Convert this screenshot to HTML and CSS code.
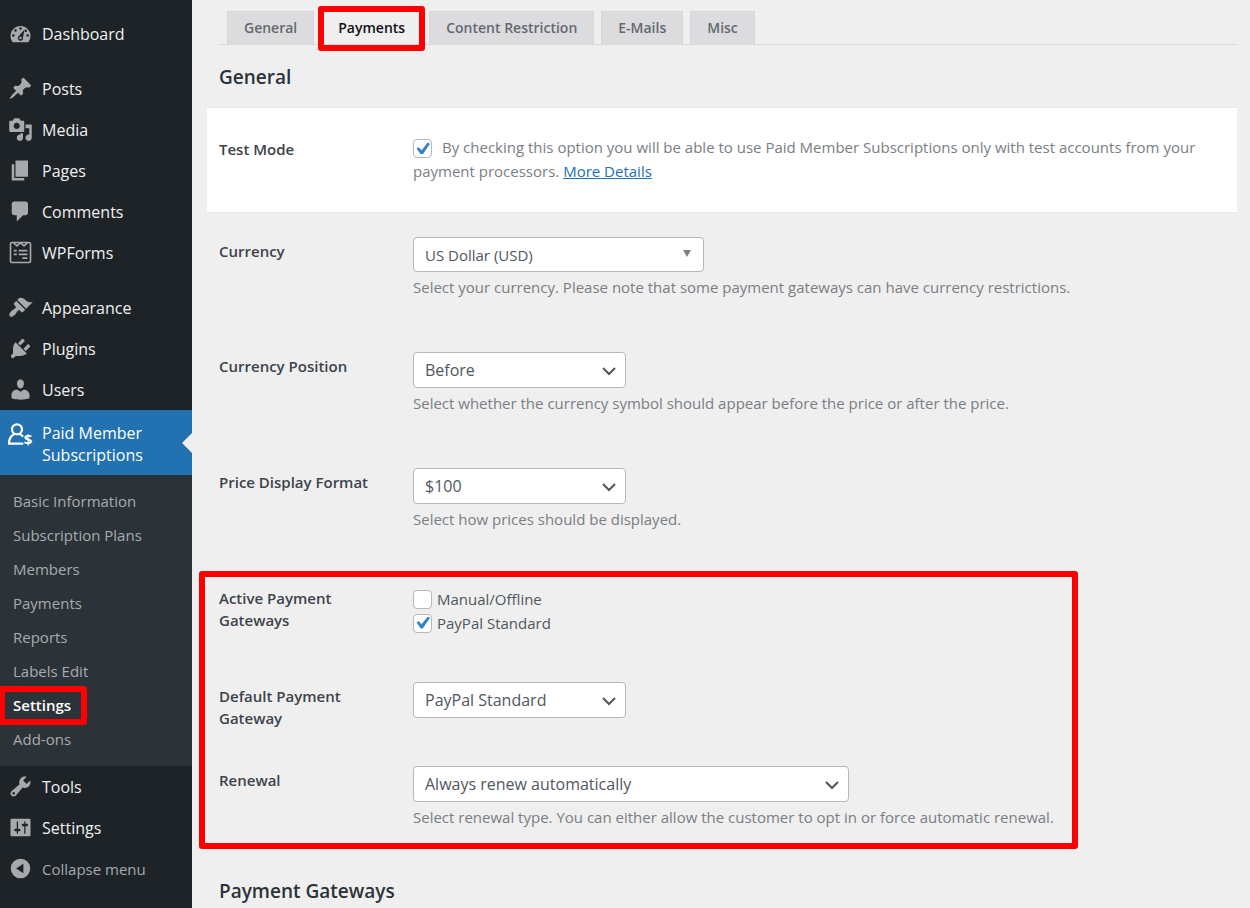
FILE: index.html
```html
<!DOCTYPE html>
<html lang="en">
<head>
  <meta charset="UTF-8">
  <meta name="viewport" content="width=device-width, initial-scale=1">
  <title>Settings - Paid Member Subscriptions</title>
  <link rel="stylesheet" href="styles.css">
</head>
<body>
  <nav class="sidebar" aria-label="Main menu">
    <ul class="menu">
      <li><a class="menu-link" href="#">
        <svg class="icon" viewBox="0 0 20 20"><path d="M3.8 17h12.4c1.1-1.400 1.800-3.100 1.800-5 0-4.400-3.600-8-8-8s-8 3.600-8 8c0 1.900.7 3.600 1.800 5z"/><g fill="#1d2327"><circle cx="10" cy="6" r="1"/><circle cx="6" cy="7.500" r="1"/><circle cx="4.300" cy="11.500" r="1"/><circle cx="15.700" cy="11.500" r="1"/><circle cx="14.200" cy="7.800" r="1"/><path d="M12.500 7.500l.5.2-1 5.300a2.100 2.100 0 1 1-3.300-1z"/></g><circle cx="10" cy="13.500" r="1"/></svg>
        Dashboard</a></li>
      <li class="separator"></li>
      <li><a class="menu-link" href="#">
        <svg class="icon" viewBox="0 0 20 20"><path d="M10.440 3.020l1.820-1.820 6.360 6.350-1.830 1.820c-1.050-.68-2.480-.57-3.410.36l-.75.75c-.92.93-1.040 2.350-.35 3.410l-1.830 1.820-2.410-2.410-2.800 2.790c-.42.42-3.380 2.710-3.800 2.290s1.860-3.390 2.280-3.810l2.790-2.790L4.100 9.360l1.830-1.820c1.050.69 2.480.57 3.400-.36l.75-.75c.93-.92 1.050-2.350.36-3.410z"/></svg>
        Posts</a></li>
      <li><a class="menu-link" href="#">
        <svg class="icon" viewBox="0 0 20 20"><path d="M13 11V4c0-.55-.45-1-1-1h-1.670L9 1H5L3.670 3H2c-.55 0-1 .45-1 1v7c0 .55.45 1 1 1h10c.55 0 1-.45 1-1zM7 4.500c1.380 0 2.500 1.120 2.500 2.500S8.380 9.500 7 9.500 4.500 8.380 4.500 7 5.620 4.500 7 4.500zM14 6h5v10.500c0 1.380-1.120 2.500-2.500 2.500S14 17.880 14 16.500s1.120-2.500 2.500-2.500c.17 0 .34.02.5.05V9h-3V6zm-4 8.050V13h2v3.500c0 1.380-1.120 2.500-2.500 2.500S7 17.880 7 16.500 8.120 14 9.500 14c.17 0 .34.02.5.05z"/></svg>
        Media</a></li>
      <li><a class="menu-link" href="#">
        <svg class="icon" viewBox="0 0 20 20"><path d="M6 15V2h10v13H6zm-1 1h8v2H3V5h2v11z"/></svg>
        Pages</a></li>
      <li><a class="menu-link" href="#">
        <svg class="icon" viewBox="0 0 20 20"><path d="M5 2h9c1.100 0 2 .9 2 2v7c0 1.100-.9 2-2 2h-2l-5 5v-5H5c-1.100 0-2-.9-2-2V4c0-1.100.9-2 2-2z"/></svg>
        Comments</a></li>
      <li><a class="menu-link" href="#">
        <svg class="icon" viewBox="0 0 20 20"><g fill="none" stroke="currentColor" stroke-width="1.300"><rect x="2" y="2" width="16" height="16" rx="1.200"/><path d="M4.500 2.300l2.700 2.400L10 2.300l2.800 2.400 2.700-2.400M4.600 8.500H7M8.500 8.500h7M4.600 11.500H7M8.500 11.500h7M11.500 14.500h4"/></g></svg>
        WPForms</a></li>
      <li class="separator"></li>
      <li><a class="menu-link" href="#">
        <svg class="icon" viewBox="0 0 20 20"><path d="M14.480 11.060L7.410 3.990l1.500-1.500c.5-.56 2.300-.47 3.510.32 1.210.8 1.430 1.280 2.910 2.100 1.180.64 2.450 1.260 4.450.85zm-.71.71L6.700 4.700 4.930 6.470c-.39.39-.39 1.020 0 1.410l1.060 1.060c.39.39.39 1.030 0 1.420-.6.6-1.430 1.110-2.210 1.690-.35.26-.7.53-1.010.84C1.430 14.230.4 16.080 1.400 17.070c.99 1 2.840-.03 4.180-1.360.31-.31.58-.66.85-1.020.57-.78 1.080-1.610 1.690-2.210.39-.39 1.020-.39 1.410 0l1.060 1.060c.39.39 1.020.39 1.410 0z"/></svg>
        Appearance</a></li>
      <li><a class="menu-link" href="#">
        <svg class="icon" viewBox="0 0 20 20"><path d="M13.110 4.360L9.870 7.600 8 5.730l3.240-3.240c.35-.34 1.050-.2 1.560.32.52.51.66 1.210.31 1.550zm-8 1.770l.91-1.120 9.010 9.010-1.190.84c-.71.71-2.630 1.160-3.820 1.160H6.140L4.900 17.260c-.59.59-1.540.59-2.120 0-.59-.58-.59-1.530 0-2.120l1.240-1.240v-3.880c0-1.130.4-3.190 1.090-3.890zm7.260 3.970l3.240-3.240c.34-.35 1.040-.21 1.550.31.52.51.66 1.210.31 1.550l-3.240 3.250z"/></svg>
        Plugins</a></li>
      <li><a class="menu-link" href="#">
        <svg class="icon" viewBox="0 0 20 20"><path d="M10 9.250c-2.270 0-2.730-3.440-2.730-3.440C7 4.020 7.820 2 9.970 2c2.160 0 2.980 2.020 2.710 3.810 0 0-.41 3.440-2.680 3.440zm0 2.570L12.720 10c2.390 0 4.520 2.330 4.520 4.530v2.490s-3.650 1.130-7.240 1.130c-3.650 0-7.240-1.130-7.240-1.130v-2.490c0-2.250 1.940-4.480 4.470-4.480z"/></svg>
        Users</a></li>
      <li>
        <a class="menu-link current" href="#">
          <svg class="icon" viewBox="0 0 20 20"><g fill="none" stroke="currentColor" stroke-width="1.800" stroke-linecap="round" stroke-linejoin="round"><circle cx="7.200" cy="5.800" r="4"/><path d="M4.800 9.800C2.300 11 .8 13.500.8 17.300h10.700M9.600 9.800c.9.400 1.500.8 2 1.400"/></g><text class="icon-dollar" x="12.600" y="18.500">$</text></svg>
          <span>Paid Member Subscriptions</span></a>
        <ul class="submenu">
          <li><a href="#">Basic Information</a></li>
          <li><a href="#">Subscription Plans</a></li>
          <li><a href="#">Members</a></li>
          <li><a href="#">Payments</a></li>
          <li><a href="#">Reports</a></li>
          <li><a href="#">Labels Edit</a></li>
          <li class="marked"><a class="selected" href="#">Settings</a></li>
          <li><a href="#">Add-ons</a></li>
        </ul>
      </li>
      <li><a class="menu-link" href="#">
        <svg class="icon" viewBox="0 0 20 20"><path d="M16.680 9.770c-1.340 1.340-3.300 1.670-4.950.99l-5.410 6.520c-.99.99-2.590.99-3.580 0s-.99-2.590 0-3.570l6.520-5.420c-.68-1.650-.35-3.610.99-4.950 1.280-1.280 3.120-1.620 4.720-1.060l-2.890 2.890 2.820 2.820 2.860-2.870c.53 1.580.18 3.390-1.080 4.650zM3.810 16.210c.4.39 1.040.39 1.430 0 .4-.4.4-1.040 0-1.430-.39-.4-1.030-.4-1.430 0-.39.39-.39 1.030 0 1.430z"/></svg>
        Tools</a></li>
      <li><a class="menu-link" href="#">
        <svg class="icon" viewBox="0 0 20 20"><path d="M18 16V4c0-.55-.45-1-1-1H3c-.55 0-1 .45-1 1v12c0 .55.45 1 1 1h14c.55 0 1-.45 1-1zM8 11h1c.55 0 1 .45 1 1s-.45 1-1 1H8v1.500c0 .28-.22.5-.5.5s-.5-.22-.5-.5V13H6c-.55 0-1-.45-1-1s.45-1 1-1h1V5.500c0-.28.22-.5.5-.5s.5.22.5.5V11zm5-2h-1c-.55 0-1-.45-1-1s.45-1 1-1h1V5.500c0-.28.22-.5.5-.5s.5.22.5.5V7h1c.55 0 1 .45 1 1s-.45 1-1 1h-1v5.500c0 .28-.22.5-.5.5s-.5-.22-.5-.5V9z"/></svg>
        Settings</a></li>
      <li><button class="menu-link collapse" type="button">
        <svg class="icon" viewBox="0 0 20 20"><path fill-rule="evenodd" d="M10 2.200a7.800 7.800 0 1 0 0 15.600 7.800 7.800 0 0 0 0-15.600zM12.300 6.200v7.600L6.500 10z"/></svg>
        Collapse menu</button></li>
    </ul>
  </nav>

  <main class="content">
    <nav class="tabs" aria-label="Settings sections">
      <a class="tab" href="#">General</a>
      <a class="tab active" href="#">Payments</a>
      <a class="tab" href="#">Content Restriction</a>
      <a class="tab" href="#">E-Mails</a>
      <a class="tab" href="#">Misc</a>
    </nav>

    <form class="settings">
      <h2>General</h2>

      <div class="row highlight">
        <label class="row-label" for="test-mode">Test Mode</label>
        <p class="description"><input type="checkbox" id="test-mode" checked>By checking this option you will be able to use Paid Member Subscriptions only with test accounts from your payment processors. <a href="#">More Details</a></p>
      </div>

      <div class="row">
        <label class="row-label" for="currency">Currency</label>
        <div>
          <div class="select currency">
            <select id="currency"><option>US Dollar (USD)</option></select>
            <svg class="caret" viewBox="0 0 8 7"><path d="M0 0h8L4 7z"/></svg>
          </div>
          <p class="description">Select your currency. Please note that some payment gateways can have currency restrictions.</p>
        </div>
      </div>

      <div class="row">
        <label class="row-label" for="position">Currency Position</label>
        <div>
          <div class="select">
            <select id="position"><option>Before</option><option>After</option></select>
            <svg class="chevron" viewBox="0 0 14 9"><path d="M1 1l6 6 6-6"/></svg>
          </div>
          <p class="description">Select whether the currency symbol should appear before the price or after the price.</p>
        </div>
      </div>

      <div class="row">
        <label class="row-label" for="format">Price Display Format</label>
        <div>
          <div class="select">
            <select id="format"><option>$100</option><option>$100.00</option></select>
            <svg class="chevron" viewBox="0 0 14 9"><path d="M1 1l6 6 6-6"/></svg>
          </div>
          <p class="description">Select how prices should be displayed.</p>
        </div>
      </div>

      <section class="gateways">
        <div class="row gateway-list" role="group" aria-labelledby="active-gateways">
          <span class="row-label" id="active-gateways">Active Payment Gateways</span>
          <div>
            <label class="check"><input type="checkbox">Manual/Offline</label>
            <label class="check"><input type="checkbox" checked>PayPal Standard</label>
          </div>
        </div>

        <div class="row">
          <label class="row-label" for="default-gateway">Default Payment Gateway</label>
          <div class="select">
            <select id="default-gateway"><option>PayPal Standard</option></select>
            <svg class="chevron" viewBox="0 0 14 9"><path d="M1 1l6 6 6-6"/></svg>
          </div>
        </div>

        <div class="row">
          <label class="row-label" for="renewal">Renewal</label>
          <div>
            <div class="select wide">
              <select id="renewal"><option>Always renew automatically</option></select>
              <svg class="chevron" viewBox="0 0 14 9"><path d="M1 1l6 6 6-6"/></svg>
            </div>
            <p class="description">Select renewal type. You can either allow the customer to opt in or force automatic renewal.</p>
          </div>
        </div>
      </section>

      <h2>Payment Gateways</h2>
    </form>
  </main>
</body>
</html>
```
FILE: styles.css
```css
*,
*::before,
*::after {
  box-sizing: border-box;
}

body {
  display: flex;
  min-height: 100vh;
  margin: 0;
  background: #efeff0;
  color: #50575e;
  font-family: "Open Sans", "Noto Sans", sans-serif;
  font-size: 15px;
  line-height: 24px;
}

h2, p, ul {
  margin: 0;
  padding: 0;
}

ul {
  list-style: none;
}

input, select, button {
  font: inherit;
  color: inherit;
}

/* Sidebar */
.sidebar {
  flex: none;
  width: 192px;
  padding-top: 13px;
  background: #1d2327;
}

.menu-link {
  display: flex;
  align-items: center;
  gap: 9px;
  width: 100%;
  height: 41px;
  padding: 0 8px;
  border: 0;
  background: none;
  color: #f0f0f1;
  font-size: 16px;
  line-height: 22px;
  text-align: left;
  text-decoration: none;
}

.icon {
  flex: none;
  width: 25px;
  height: 25px;
  fill: currentColor;
  color: #a7aaad;
  overflow: visible;
}

.icon-dollar {
  font-size: 12px;
  font-weight: 700;
}

.separator {
  height: 14px;
}

.collapse {
  color: #a7aaad;
  font-size: 15px;
}

.current {
  position: relative;
  align-items: flex-start;
  height: 65px;
  padding-top: 12px;
  background: #2271b1;
  color: #fff;
}

.current .icon {
  color: #fff;
}

.current::after {
  content: "";
  position: absolute;
  right: 0;
  top: 23px;
  border: 10px solid transparent;
  border-left: 0;
  border-right-color: #efeff0;
}

.submenu {
  padding: 9px 0 10px;
  background: #2c3338;
}

.submenu a {
  display: block;
  padding: 5px 13px;
  color: #a7abb0;
  text-decoration: none;
}

.submenu .selected {
  color: #fff;
  font-weight: 600;
}

.marked {
  position: relative;
}

.marked::after,
.tab.active::after {
  content: "";
  position: absolute;
  border: 6px solid #f00;
  border-radius: 3px;
  pointer-events: none;
}

.marked::after {
  left: -1px;
  top: -2px;
  width: 88px;
  height: 39px;
}

/* Content */
.content {
  flex: 1;
  min-width: 0;
  padding: 11px 13px 0 27px;
}

.tabs {
  display: flex;
  gap: 7px;
  padding-left: 8px;
  border-bottom: 1px solid #d8dadd;
}

.tab {
  padding: 4px 16px;
  border: 1px solid #d5d7da;
  border-bottom: 0;
  background: #dcdcde;
  color: #646970;
  font-size: 14px;
  font-weight: 600;
  text-decoration: none;
}

.tab.active {
  position: relative;
  border-color: transparent;
  background: none;
  color: #111;
}

.tab.active::after {
  inset: -6px -4px -7px;
}

h2 {
  padding: 18px 0 16px;
  color: #2c3338;
  font-size: 19px;
  font-weight: 600;
  line-height: 28px;
}

.row {
  display: grid;
  grid-template-columns: 182px 1fr;
  column-gap: 12px;
  margin-bottom: 53px;
}

.row-label {
  padding: 3px 24px 0 0;
  color: #3c434a;
  font-weight: 600;
  line-height: 22px;
}

.highlight {
  margin: 0 0 24px -12px;
  padding: 27px 12px 29px;
  border: solid #e8e9eb;
  border-width: 1px 0;
  background: #fff;
}

.description {
  color: #7a7e83;
}

.select + .description {
  margin-top: 3px;
}

a {
  color: #2271b1;
}

/* Form controls */
.select {
  position: relative;
  width: 213px;
}

.select.currency {
  width: 291px;
}

.select.wide {
  width: 436px;
}

select {
  display: block;
  appearance: none;
  width: 100%;
  height: 36px;
  padding: 0 32px 0 11px;
  border: 1px solid #b4b7bb;
  border-radius: 4px;
  background: #fff;
  font-size: 16px;
}

.currency select {
  height: 35px;
  font-size: 15px;
}

.caret,
.chevron {
  position: absolute;
  pointer-events: none;
}

.caret {
  right: 13px;
  top: 13px;
  width: 8px;
  height: 7px;
  fill: #7e7e7e;
}

.chevron {
  right: 10px;
  top: 15px;
  width: 14px;
  height: 9px;
  fill: none;
  stroke: #50575e;
  stroke-width: 2;
}

input[type="checkbox"] {
  appearance: none;
  width: 19px;
  height: 19px;
  margin: 0 5px 0 0;
  border: 1px solid #b4b7bb;
  border-radius: 4px;
  background: #fff;
  vertical-align: middle;
}

input[type="checkbox"]:checked::before {
  content: "";
  display: block;
  width: 14px;
  height: 12px;
  margin: 2px;
  background: #3582c4;
  clip-path: polygon(4% 50%, 20% 40%, 40% 64%, 84% 0, 100% 10%, 48% 100%, 34% 100%);
}

.description input[type="checkbox"] {
  margin-right: 10px;
}

.check {
  display: flex;
  align-items: center;
}

.gateways {
  max-width: 879px;
  margin: -13px 0 10px -20px;
  padding: 10px 14px 14px;
  border: 6px solid #f00;
  border-radius: 3px;
}

.gateways .row {
  margin-bottom: 37px;
}

.gateways .row:last-child {
  margin-bottom: 0;
}

.gateways .gateway-list {
  margin-bottom: 47px;
}

.gateway-list .row-label {
  padding-top: 0;
}
```
